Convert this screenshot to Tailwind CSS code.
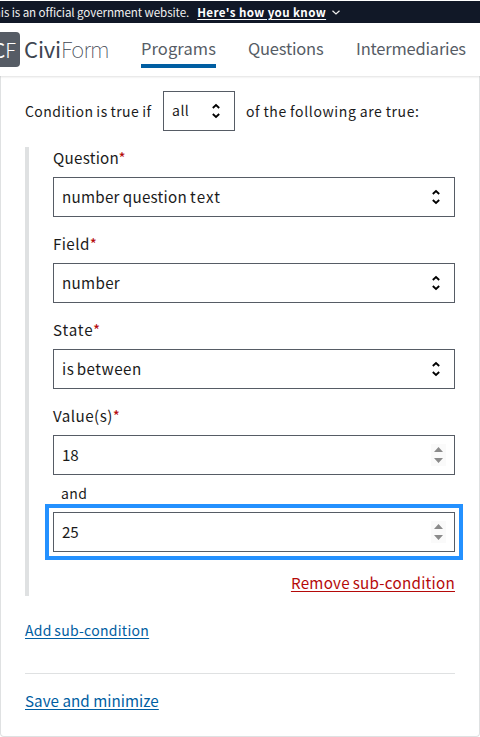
<!DOCTYPE html>
<html lang="en">
<head>
<meta charset="utf-8">
<title>CiviForm</title>
<script src="https://cdn.jsdelivr.net/npm/@tailwindcss/browser@4"></script>
</head>
<body class="h-[737px] overflow-hidden bg-white pt-px font-['Noto_Sans_CJK_SC','Open_Sans',sans-serif] text-[15.2px] text-[#1b1b1b] whitespace-nowrap">
<div class="flex h-[22px] items-center overflow-hidden bg-[#111827] text-[11.6px] leading-[22px] text-[#f0f0f0]">
  <span class="-ml-[13px] tracking-[-0.09px]">This is an official government website.</span>
  <span class="ml-2 font-bold tracking-[0.38px] text-white underline decoration-1 underline-offset-2">Here's how you know</span>
  <svg class="ml-[6px] mt-px h-[5px] w-2" viewBox="0 0 8 5" fill="none" stroke="#f0f0f0" stroke-width="1.2"><path d="M.5.7 4 4 7.500.7"/></svg>
</div>
<header class="relative z-10 flex h-[53px] bg-white shadow-[0_1px_2px_rgba(0,0,0,0.12)]">
  <div class="-ml-[15px] mt-[9px] flex h-[35px] w-[35px] items-center justify-end rounded bg-[#565c65] pr-1 text-[20px] leading-[35px] text-white"><span>C</span><span class="font-light">F</span></div>
  <div class="ml-1 mt-[9px] w-[85px] text-[22px] leading-[32px] text-[#3d4551]"><span class="font-normal tracking-[-0.15px]">Civi</span><span class="font-thin tracking-[-0.8px]">Form</span></div>
  <nav class="ml-8 flex text-[16.500px] leading-[47px] text-[#565c65]">
    <a class="mt-[2px] h-[43px] w-[75px] border-b-4 border-[#005ea2] tracking-[0.1px]">Programs</a>
    <a class="ml-8 mt-[2px] w-[76px] tracking-[-0.2px]">Questions</a>
    <a class="ml-8 mt-[2px] tracking-[-0.2px]">Intermediaries</a>
  </nav>
</header>
<main class="h-[661px] rounded-b border border-t-0 border-[#dfe1e2] px-6 pt-[15px]">
  <div class="flex h-10 items-center text-[14px]">
    <span class="w-[138px] tracking-[0.42px] [word-spacing:-0.6px]">Condition is true if</span>
    <div class="flex h-10 w-[72px] items-center justify-between border border-[#565c65] pl-2 pr-[14px] leading-[36px]"><span class="-mt-[2px] tracking-[0.5px]">all</span><svg class="h-4 w-2" viewBox="0 0 8 16" fill="none" stroke="#000" stroke-width="1.8"><path d="M.8 5 4 2l3.200 3M.8 11 4 14l3.200-3"/></svg></div>
    <span class="ml-[11px] tracking-[0.63px] [word-spacing:-0.6px]">of the following are true:</span>
  </div>
  <section class="mt-4 h-[449px] border-l-4 border-[#dfe1e2] pl-6">
    <div class="h-[30px] leading-[21px] tracking-[0.25px]">Question<span class="text-[#b50909]">*</span></div>
    <div class="flex h-10 items-center justify-between border border-[#565c65] pl-2 pr-[14px]"><span class="-mt-[2px] tracking-[0.25px] [word-spacing:-0.6px]">number question <span class="tracking-[1.1px]">text</span></span><svg class="h-4 w-2" viewBox="0 0 8 16" fill="none" stroke="#000" stroke-width="1.8"><path d="M.8 5 4 2l3.200 3M.8 11 4 14l3.200-3"/></svg></div>
    <div class="mt-4 h-[30px] leading-[21px] tracking-[0.4px]">Field<span class="text-[#b50909]">*</span></div>
    <div class="flex h-10 items-center justify-between border border-[#565c65] pl-2 pr-[14px]"><span class="-mt-[2px] tracking-[0.3px]">number</span><svg class="h-4 w-2" viewBox="0 0 8 16" fill="none" stroke="#000" stroke-width="1.8"><path d="M.8 5 4 2l3.200 3M.8 11 4 14l3.200-3"/></svg></div>
    <div class="mt-4 h-[30px] leading-[21px] tracking-[0.85px]">State<span class="text-[#b50909]">*</span></div>
    <div class="flex h-10 items-center justify-between border border-[#565c65] pl-2 pr-[14px]"><span class="-mt-[2px] tracking-[0.5px] [word-spacing:-1.5px]">is between</span><svg class="h-4 w-2" viewBox="0 0 8 16" fill="none" stroke="#000" stroke-width="1.8"><path d="M.8 5 4 2l3.200 3M.8 11 4 14l3.200-3"/></svg></div>
    <div class="mt-4 h-[30px] leading-[21px] tracking-[0.45px]">Value(s)<span class="text-[#b50909]">*</span></div>
    <div class="flex h-10 items-center justify-between border border-[#565c65] pl-2 pr-2"><span class="-mt-[2px] tracking-[-0.3px]">18</span><svg class="h-[22px] w-[15px] bg-[#fafafa]" viewBox="0 0 15 22" fill="#8b8b8b"><path d="M3 8 7.500 3 12 8zM3 14h9l-4.500 5z"/></svg></div>
    <div class="h-[37px] pl-2 text-[14px] leading-[37px] tracking-[0.4px]">and</div>
    <div class="flex h-10 items-center justify-between border border-[#565c65] pl-2 pr-2 outline-4 outline-offset-4 outline-[#2491ff]"><span class="-mt-[2px] tracking-[-0.3px]">25</span><svg class="h-[22px] w-[15px] bg-[#fafafa]" viewBox="0 0 15 22" fill="#8b8b8b"><path d="M3 8 7.500 3 12 8zM3 14h9l-4.500 5z"/></svg></div>
    <div class="mt-[18px] text-right leading-6 text-[#b50909]"><a class="tracking-[0.26px] [word-spacing:-0.8px] underline decoration-1 underline-offset-2">Remove sub-condition</a></div>
  </section>
  <div class="mt-6 h-[54px] border-b border-[#dfe1e2] text-[14px] leading-[21px] text-[#005ea2]"><a class="tracking-[0.28px] [word-spacing:-0.8px] underline decoration-1 underline-offset-2">Add sub-condition</a></div>
  <div class="mt-[14px] text-[15.2px] leading-[24px] tracking-[0.03px] text-[#005ea2]"><a class="underline decoration-1 underline-offset-2">Save and minimize</a></div>
</main>
</body>
</html>
